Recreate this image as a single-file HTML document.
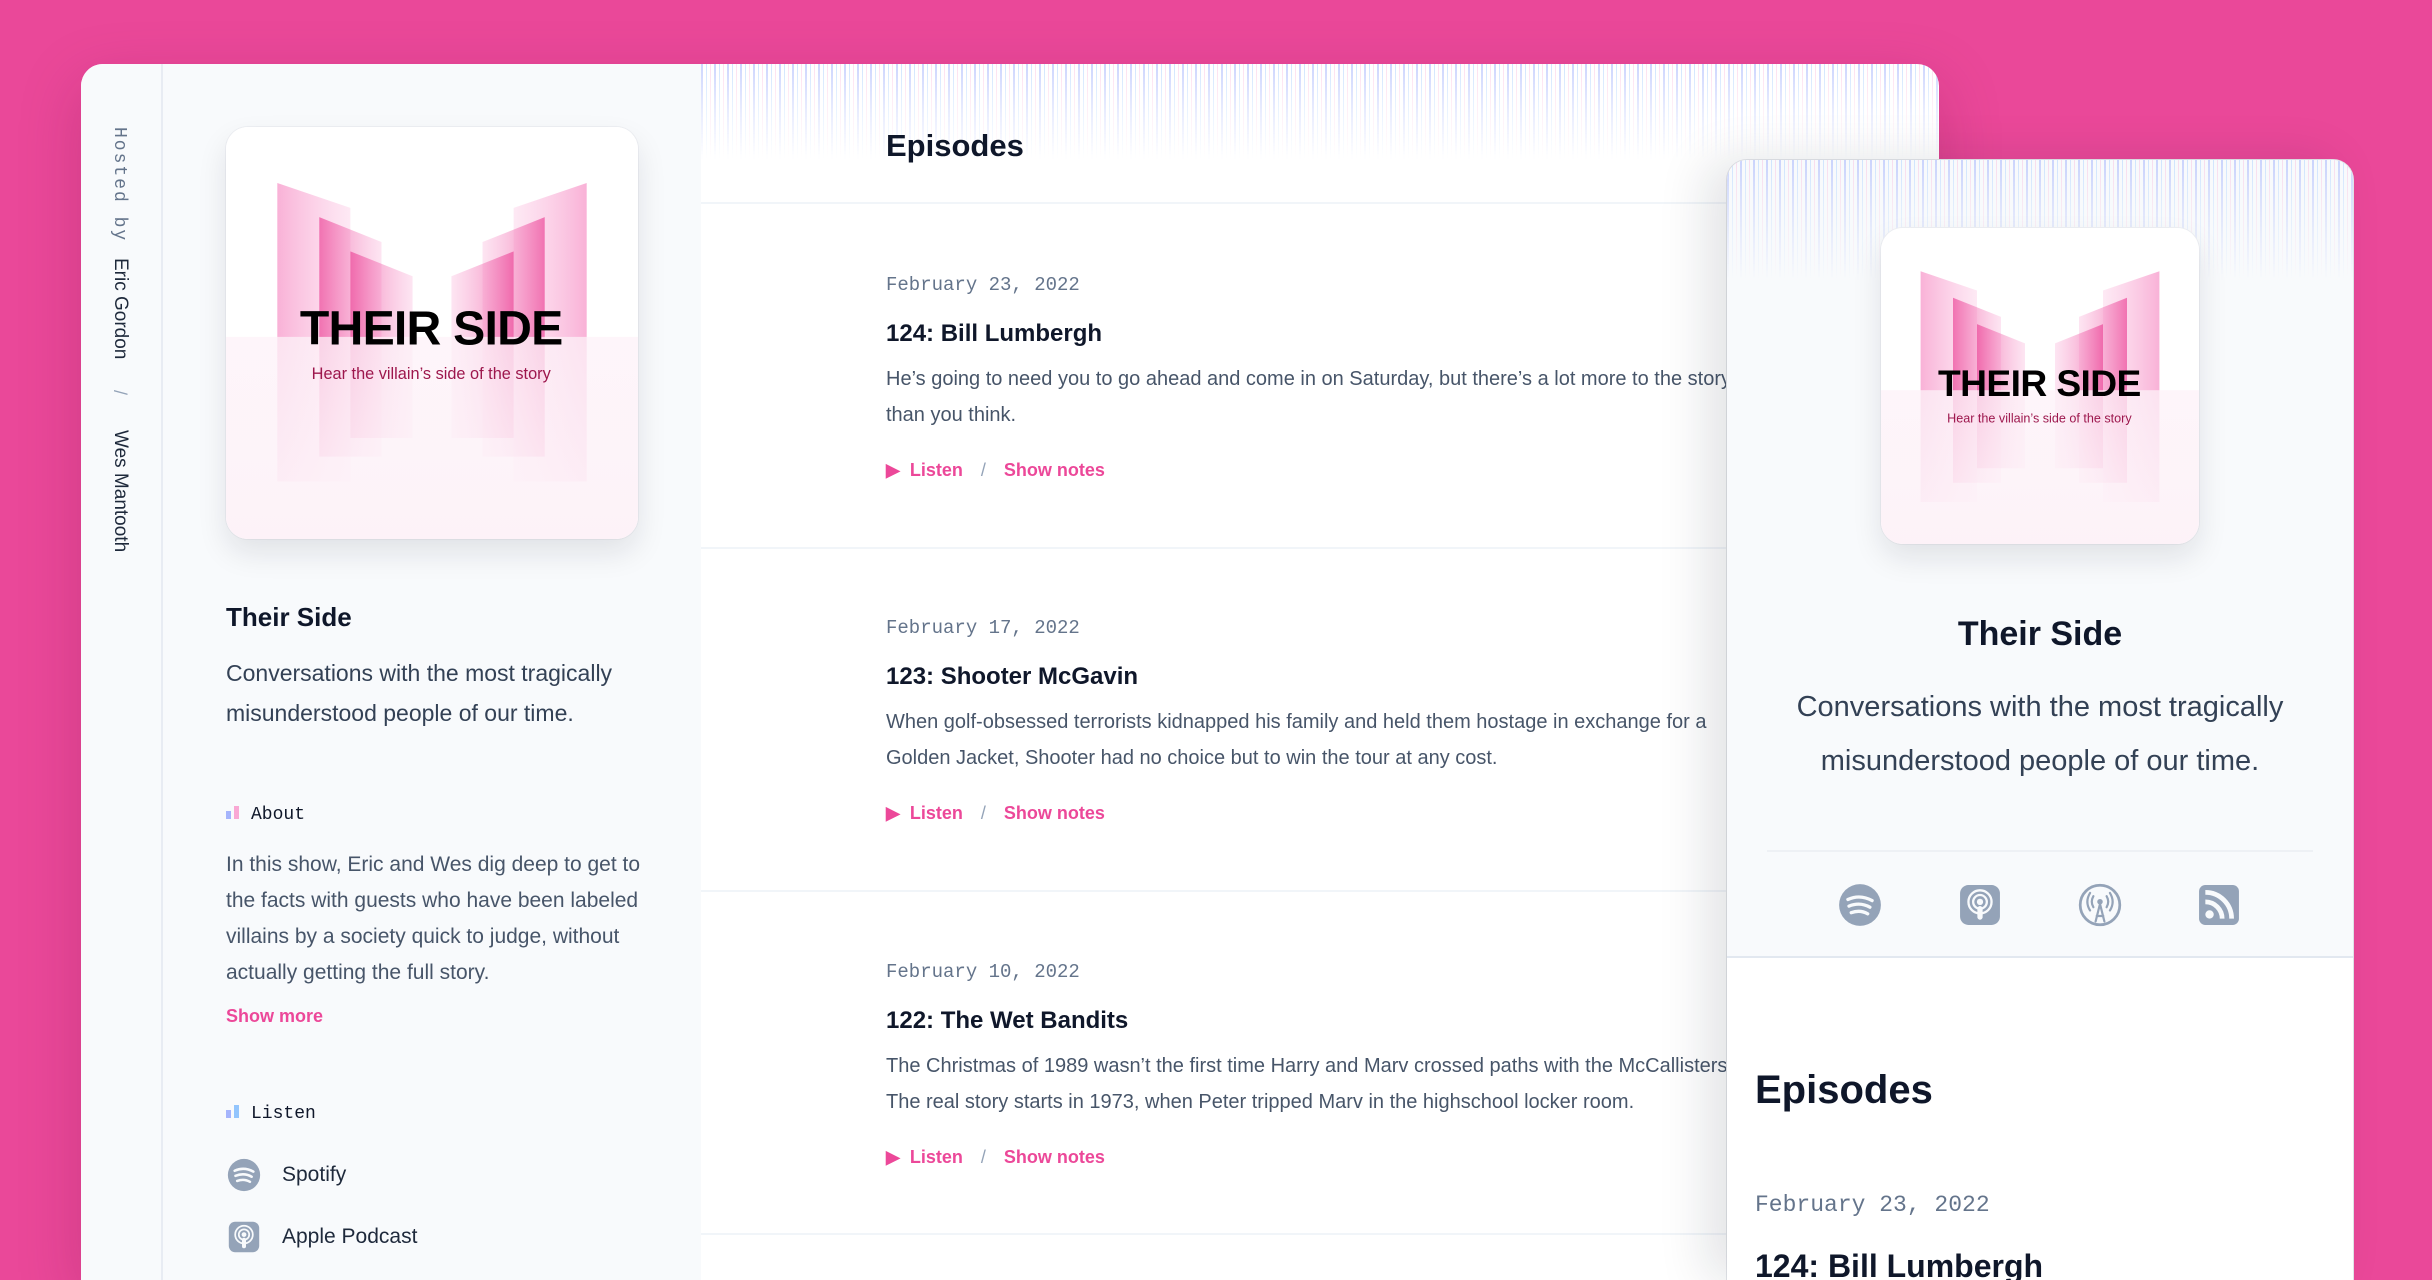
<!DOCTYPE html>
<html style="width:2432px;height:1280px;overflow:hidden"><head><meta charset="utf-8">
<style>
*{margin:0;padding:0;box-sizing:border-box}
body{width:2432px;height:1280px;overflow:hidden;background:#ea4899;font-family:"Liberation Sans",sans-serif;color:#0f172a;position:relative}
.abs{position:absolute}
.win{position:absolute;left:81px;top:64px;width:1858px;height:1216px;background:#fff;border-radius:22px 22px 0 0;overflow:hidden;box-shadow:0 20px 60px rgba(120,20,70,.25)}
.side{position:absolute;left:0;top:0;width:82px;height:100%;background:#f8fafc;border-right:2px solid #e8ecf3}
.left{position:absolute;left:82px;top:0;width:538px;height:100%;background:#f8fafc}
.vt{writing-mode:vertical-rl;position:absolute;left:28px;white-space:nowrap}
.mono{font-family:"Liberation Mono",monospace}
.card{position:absolute;border-radius:22px;overflow:hidden;background:#fff;box-shadow:0 14px 30px rgba(15,23,42,.10),0 0 0 1px #eef0f4}
.wave{position:absolute;background:repeating-linear-gradient(90deg,rgba(165,180,252,.55) 0 2px,transparent 2px 5px,rgba(191,219,254,.7) 5px 6px,transparent 6px 9px,rgba(249,168,212,.35) 9px 10px,transparent 10px 13px);-webkit-mask-image:linear-gradient(180deg,#000 0%,rgba(0,0,0,.5) 45%,transparent 100%)}
.ep{position:absolute;left:805px;width:1200px}
.date{font-family:"Liberation Mono",monospace;font-size:19px;color:#64748b}
.etitle{font-size:24px;font-weight:bold;color:#0f172a;margin-top:24px}
.desc{font-size:20px;color:#475569;line-height:36px;margin-top:13px;white-space:nowrap}
.links{margin-top:27px;font-size:18px;color:#ec4899;font-weight:bold}
.links .sl{color:#94a3b8;font-weight:normal;margin:0 18px}
.sep{position:absolute;left:620px;width:1300px;height:2px;background:#f1f5f9}
.pink{color:#ec4899}
.ic{fill:#94a3b8}
</style></head><body>

<svg width="0" height="0" style="position:absolute">
<defs>
<linearGradient id="gl" x1="0" y1="0" x2="1" y2="0"><stop offset="0" stop-color="#f472b6" stop-opacity=".55"/><stop offset="1" stop-color="#f9a8d4" stop-opacity=".25"/></linearGradient>
<linearGradient id="gm" x1="0" y1="0" x2="1" y2="0"><stop offset="0" stop-color="#ec4899" stop-opacity=".7"/><stop offset="1" stop-color="#f9a8d4" stop-opacity=".3"/></linearGradient>
<linearGradient id="gr" x1="1" y1="0" x2="0" y2="0"><stop offset="0" stop-color="#f472b6" stop-opacity=".55"/><stop offset="1" stop-color="#f9a8d4" stop-opacity=".25"/></linearGradient>
<linearGradient id="gmr" x1="1" y1="0" x2="0" y2="0"><stop offset="0" stop-color="#ec4899" stop-opacity=".7"/><stop offset="1" stop-color="#f9a8d4" stop-opacity=".3"/></linearGradient>
<linearGradient id="fade" x1="0" y1="0" x2="0" y2="1"><stop offset="0" stop-color="#fdf2f8" stop-opacity=".75"/><stop offset="1" stop-color="#fdf2f8" stop-opacity=".97"/></linearGradient>
<symbol id="art" viewBox="0 0 265 265">
<rect width="265" height="265" fill="#fff"/>
<polygon points="33,36 80,52 80,228 33,228" fill="url(#gl)"/>
<polygon points="60,58 100,74 100,212 60,212" fill="url(#gm)"/>
<polygon points="80,80 120,96 120,200 80,200" fill="url(#gm)"/>
<polygon points="232,36 185,52 185,228 232,228" fill="url(#gr)"/>
<polygon points="205,58 165,74 165,212 205,212" fill="url(#gmr)"/>
<polygon points="185,80 145,96 145,200 185,200" fill="url(#gmr)"/>
<rect x="0" y="135" width="265" height="130" fill="url(#fade)"/>
<text x="132" y="140" text-anchor="middle" font-family="Liberation Sans,sans-serif" font-weight="bold" font-size="31" fill="#000" letter-spacing="-0.5">THEIR SIDE</text>
<text x="132" y="162" text-anchor="middle" font-family="Liberation Sans,sans-serif" font-size="10.5" fill="#9d174d">Hear the villain’s side of the story</text>
</symbol>
<symbol id="spot" viewBox="0 0 40 40"><circle cx="20" cy="20" r="19" class="ic"/><path d="M9 15 Q20 10 31 16 M10 21 Q20 17 29 22 M12 27 Q20 24 27 28" stroke="#f8fafc" stroke-width="3" fill="none" stroke-linecap="round"/></symbol>
<symbol id="apple" viewBox="0 0 40 40"><rect x="1" y="1" width="38" height="38" rx="8" class="ic"/><circle cx="20" cy="17" r="11" stroke="#f8fafc" stroke-width="2.2" fill="none"/><circle cx="20" cy="17" r="6.5" stroke="#f8fafc" stroke-width="2.2" fill="none"/><circle cx="20" cy="17" r="3" fill="#f8fafc"/><rect x="17.5" y="21" width="5" height="13" rx="2.5" fill="#f8fafc"/></symbol>
<symbol id="over" viewBox="0 0 40 40"><circle cx="20" cy="20" r="18" stroke="#94a3b8" stroke-width="2.5" fill="none"/><circle cx="20" cy="17" r="2.5" class="ic"/><path d="M14 12 Q11 17 14 22 M26 12 Q29 17 26 22 M11 9 Q6 17 11 25 M29 9 Q34 17 29 25 M20 19 L16 35 M20 19 L24 35 M17 30 L23 30" stroke="#94a3b8" stroke-width="2" fill="none" stroke-linecap="round"/></symbol>
<symbol id="rss" viewBox="0 0 40 40"><rect x="1" y="1" width="38" height="38" rx="6" class="ic"/><circle cx="11" cy="29" r="4" fill="#f8fafc"/><path d="M7 17 A16 16 0 0 1 23 33 M7 8 A25 25 0 0 1 32 33" stroke="#f8fafc" stroke-width="4.5" fill="none"/></symbol>
</defs></svg>

<div class="win">
  <div class="side">
    <div class="vt mono" style="top:63px;font-size:18px;color:#64748b;letter-spacing:2px">Hosted by</div>
    <div class="vt" style="top:194px;font-size:19px;color:#1e293b">Eric Gordon</div>
    <div class="vt" style="top:326px;font-size:18px;color:#94a3b8">/</div>
    <div class="vt" style="top:366px;font-size:19px;color:#1e293b">Wes Mantooth</div>
  </div>
  <div class="left">
    <div class="card" style="left:63px;top:63px;width:412px;height:412px"><svg width="412" height="412"><use href="#art"/></svg></div>
    <div class="abs" style="left:63px;top:538px;font-size:26px;font-weight:bold;color:#0f172a">Their Side</div>
    <div class="abs" style="left:63px;top:589px;font-size:23px;line-height:40px;color:#334155;width:440px">Conversations with the most tragically misunderstood people of our time.</div>
    <div class="abs mono" style="left:63px;top:741px;font-size:18px;color:#0f172a"><span style="display:inline-block;width:5px;height:8px;background:#a5b4fc;margin-right:3px"></span><span style="display:inline-block;width:5px;height:13px;background:#f9a8d4;margin-right:12px"></span>About</div>
    <div class="abs" style="left:63px;top:783px;font-size:21px;line-height:36px;color:#475569;width:432px">In this show, Eric and Wes dig deep to get to the facts with guests who have been labeled villains by a society quick to judge, without actually getting the full story.</div>
    <div class="abs pink" style="left:63px;top:942px;font-size:18px;font-weight:bold">Show more</div>
    <div class="abs mono" style="left:63px;top:1040px;font-size:18px;color:#0f172a"><span style="display:inline-block;width:5px;height:8px;background:#a5b4fc;margin-right:3px"></span><span style="display:inline-block;width:5px;height:13px;background:#93c5fd;margin-right:12px"></span>Listen</div>
    <svg class="abs" style="left:64px;top:1094px" width="34" height="34"><use href="#spot"/></svg>
    <div class="abs" style="left:119px;top:1099px;font-size:21px;color:#1e293b">Spotify</div>
    <svg class="abs" style="left:65px;top:1157px" width="32" height="32"><use href="#apple"/></svg>
    <div class="abs" style="left:119px;top:1161px;font-size:21px;color:#1e293b">Apple Podcast</div>
  </div>
  <div class="wave" style="left:620px;top:0;width:1238px;height:95px"></div>
  <div class="abs" style="left:805px;top:64px;font-size:31px;font-weight:bold;color:#0f172a">Episodes</div>
  <div class="sep" style="top:138px"></div>

  <div class="ep" style="top:210px"><div class="date">February 23, 2022</div><div class="etitle">124: Bill Lumbergh</div><div class="desc">He’s going to need you to go ahead and come in on Saturday, but there’s a lot more to the story<br>than you think.</div><div class="links">▶&nbsp; Listen<span class="sl">/</span>Show notes</div></div>
  <div class="sep" style="top:483px"></div>
  <div class="ep" style="top:553px"><div class="date">February 17, 2022</div><div class="etitle">123: Shooter McGavin</div><div class="desc">When golf-obsessed terrorists kidnapped his family and held them hostage in exchange for a<br>Golden Jacket, Shooter had no choice but to win the tour at any cost.</div><div class="links">▶&nbsp; Listen<span class="sl">/</span>Show notes</div></div>
  <div class="sep" style="top:826px"></div>
  <div class="ep" style="top:897px"><div class="date">February 10, 2022</div><div class="etitle">122: The Wet Bandits</div><div class="desc">The Christmas of 1989 wasn’t the first time Harry and Marv crossed paths with the McCallisters.<br>The real story starts in 1973, when Peter tripped Marv in the highschool locker room.</div><div class="links">▶&nbsp; Listen<span class="sl">/</span>Show notes</div></div>
  <div class="sep" style="top:1169px"></div>
</div>

<div class="abs" style="left:1727px;top:160px;width:626px;height:1120px;background:#fff;border-radius:20px 20px 0 0;overflow:hidden;box-shadow:-20px 0 50px rgba(15,23,42,.12),0 0 0 1px #e5e7eb">
  <div class="abs" style="left:0;top:0;width:626px;height:798px;background:#f8fafc;border-bottom:2px solid #e2e8f0"></div>
  <div class="wave" style="left:0;top:0;width:626px;height:120px"></div>
  <div class="card" style="left:154px;top:68px;width:318px;height:316px"><svg width="318" height="316" viewBox="0 0 265 263" preserveAspectRatio="none"><use href="#art" width="265" height="265"/></svg></div>
  <div class="abs" style="left:0;width:626px;text-align:center;top:455px;font-size:34px;font-weight:bold;color:#0f172a">Their Side</div>
  <div class="abs" style="left:40px;width:546px;text-align:center;top:520px;font-size:29px;line-height:54px;color:#334155">Conversations with the most tragically misunderstood people of our time.</div>
  <div class="abs" style="left:40px;top:690px;width:546px;height:2px;background:#eef1f5"></div>
  <svg class="abs" style="left:111px;top:723px" width="44" height="44"><use href="#spot"/></svg>
  <svg class="abs" style="left:232px;top:724px" width="42" height="42"><use href="#apple"/></svg>
  <svg class="abs" style="left:351px;top:723px" width="44" height="44"><use href="#over"/></svg>
  <svg class="abs" style="left:471px;top:724px" width="42" height="42"><use href="#rss"/></svg>
  <div class="abs" style="left:28px;top:908px;font-size:40px;font-weight:bold;color:#0f172a">Episodes</div>
  <div class="abs mono" style="left:28px;top:1032px;font-size:23px;color:#64748b">February 23, 2022</div>
  <div class="abs" style="left:28px;top:1088px;font-size:32px;font-weight:bold;color:#0f172a">124: Bill Lumbergh</div>
</div>
</body></html>
